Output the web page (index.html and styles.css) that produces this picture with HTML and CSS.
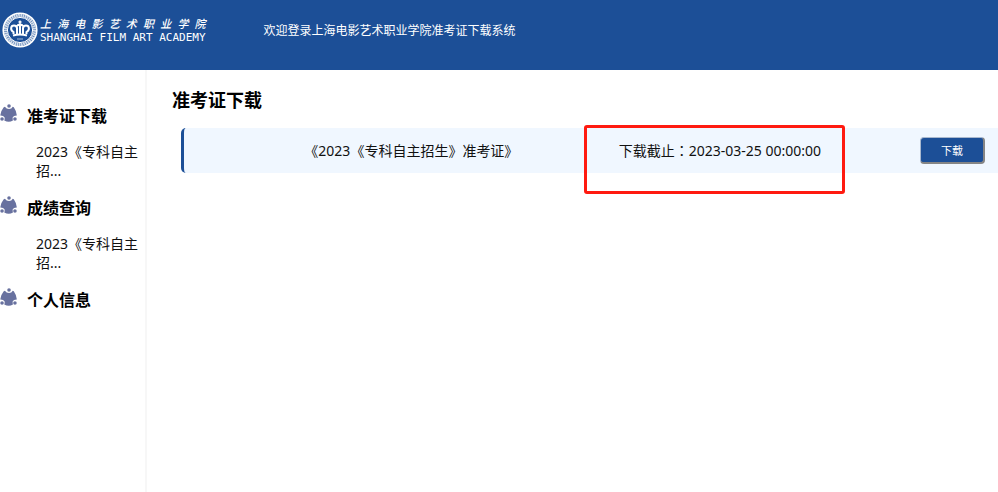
FILE: index.html
```html
<!DOCTYPE html>
<html lang="zh-CN">
<head>
    <meta charset="UTF-8">
    <meta name="viewport" content="width=device-width, initial-scale=1.0">
    <title>准考证下载</title>
    <link rel="stylesheet" href="styles.css">
</head>
<body>
    <svg class="sprite" aria-hidden="true">
        <symbol id="people" viewBox="0 0 16 17">
            <circle cx="8.5" cy="1.9" r="1.7"/>
            <circle cx="1.9" cy="14.2" r="1.7"/>
            <circle cx="14.1" cy="14.2" r="1.7"/>
            <path d="M4.6 2.6Q6 4.800 8.500 4.800Q11 4.800 12 2.600L13 3Q15 5.500 15.900 10.800Q12.800 10.700 12 12.600Q11.800 14 12.200 15.600Q8.300 18 4 15.600Q4.600 13.800 4.200 12.600Q3.300 10.700 .2 10.800Q1.200 5.500 3.500 3Z"/>
        </symbol>
    </svg>

    <header class="header">
        <div class="logo">
            <svg class="emblem" viewBox="0 0 36 36" fill="none" stroke="#fff">
                <circle cx="18" cy="18" r="16.8" stroke-width="1.6"/>
                <circle cx="18" cy="18" r="14.5" stroke-width="3.4" stroke-dasharray="1.8 .4" opacity=".8"/>
                <circle cx="18" cy="18" r="12.6" stroke-width="1"/>
                <path d="M11.500 22V20C8 18 8.500 13.500 12 13.500Q14.500 13.500 15 16V22M24.500 22V20C28 18 27.500 13.500 24 13.500Q21.500 13.500 21 16V22M14.500 14.500Q16 12.500 18 12.500Q20 12.500 21.500 14.500M18 12V22" stroke-width="2"/>
                <path d="M11 23.500Q18 21.500 25 23.500" stroke-width="2.200"/>
                <path d="M18 8.500V12M16.500 10H19.500" stroke-width="1.400"/>
                <path d="M15 27H21" stroke-width="1" opacity=".6"/>
            </svg>
            <div class="logo-text">
                <div class="logo-cn">
                    <span>上</span><span>海</span><span>电</span><span>影</span><span>艺</span><span>术</span><span>职</span><span>业</span><span>学</span><span>院</span>
                </div>
                <div class="logo-en">SHANGHAI FILM ART ACADEMY</div>
            </div>
        </div>
        <div class="welcome">欢迎登录上海电影艺术职业学院准考证下载系统</div>
    </header>

    <div class="container">
        <nav class="sidebar">
            <div class="menu">
                <a class="menu-title" href="#ticket"><svg class="icon"><use href="#people"/></svg>准考证下载</a>
                <a class="menu-item" href="#ticket">2023《专科自主招...</a>
            </div>
            <div class="menu">
                <a class="menu-title" href="#score"><svg class="icon"><use href="#people"/></svg>成绩查询</a>
                <a class="menu-item" href="#score">2023《专科自主招...</a>
            </div>
            <div class="menu">
                <a class="menu-title" href="#info"><svg class="icon"><use href="#people"/></svg>个人信息</a>
            </div>
        </nav>

        <main class="content" id="ticket">
            <h1>准考证下载</h1>
            <div class="ticket">
                <div class="ticket-name">《2023《专科自主招生》准考证》</div>
                <div class="deadline">下载截止<span class="colon" lang="zh-TW">：</span>2023-03-25 00:00:00</div>
                <button class="download" type="button">下载</button>
            </div>
        </main>
    </div>
</body>
</html>
```

FILE: styles.css
```css
:root {
    --blue: #1c4f97;
    --row-bg: #f0f7ff;
    --icon: #68719f;
}

* {
    box-sizing: border-box;
}

body {
    margin: 0;
    min-height: 100vh;
    display: flex;
    flex-direction: column;
    background: #fff;
    color: #111;
    font-family: "Noto Sans", "Noto Sans CJK SC", sans-serif;
    font-size: 14px;
}

a {
    color: inherit;
    text-decoration: none;
}

.sprite {
    display: none;
}

.header {
    display: flex;
    align-items: flex-start;
    gap: 58px;
    height: 70px;
    padding: 12px 2px;
    background: var(--blue);
    color: #fff;
}

.logo {
    display: flex;
    gap: 2px;
}

.emblem {
    width: 36px;
    height: 36px;
}

.logo-text {
    padding-top: 3px;
}

.logo-cn {
    display: flex;
    justify-content: space-between;
    font-family: "Noto Sans CJK SC", sans-serif;
    font-size: 11px;
    font-style: italic;
    font-weight: 500;
    line-height: 16px;
}

.logo-en {
    font-family: "DejaVu Sans Mono", monospace;
    font-size: 11px;
    line-height: 13px;
    white-space: nowrap;
}

.welcome {
    padding-top: 10px;
    font-size: 12px;
    line-height: 18px;
}

.container {
    flex: 1;
    display: flex;
}

.sidebar {
    flex: 0 0 147px;
    padding-top: 34px;
    border-right: 2px solid #f7f7f7;
}

.menu {
    margin-bottom: 16px;
}

.menu-title {
    display: flex;
    align-items: flex-start;
    gap: 10px;
    color: #000;
    font-size: 16px;
    font-weight: bold;
    line-height: 25px;
}

.icon {
    width: 17px;
    height: 18px;
    fill: var(--icon);
}

.menu-item {
    display: block;
    margin-top: 13px;
    padding: 0 4px 0 36px;
    line-height: 19px;
    word-break: break-all;
}

.content {
    flex: 1;
    padding: 18px 0 0 25px;
}

h1 {
    margin: 0 0 16px;
    color: #000;
    font-size: 18px;
    line-height: 24px;
}

.ticket {
    display: flex;
    align-items: center;
    margin-left: 9px;
    padding: 0 13px 0 55px;
    background: var(--row-bg);
    border-left: 3px solid var(--blue);
    border-radius: 5px 0 0 5px;
    line-height: 45px;
}

.ticket-name {
    flex: 1;
    text-align: center;
}

.deadline {
    position: relative;
    padding: 0 24px 0 35px;
    margin-right: 75px;
    white-space: nowrap;
}

.colon {
    font-family: "Noto Sans CJK TC", sans-serif;
}

.deadline::after {
    content: "";
    position: absolute;
    inset: -3px 0 -21px;
    border: 3px solid #ff1a10;
    border-radius: 3px;
}

.download {
    width: 65px;
    height: 27px;
    padding: 0;
    border: 2px solid;
    border-color: #a9b9cf #858585 #858585 #a9b9cf;
    border-width: 1px 2px 2px 1px;
    border-radius: 4px;
    background: var(--blue);
    color: #fff;
    font-family: inherit;
    font-size: 11px;
    cursor: pointer;
}
```
